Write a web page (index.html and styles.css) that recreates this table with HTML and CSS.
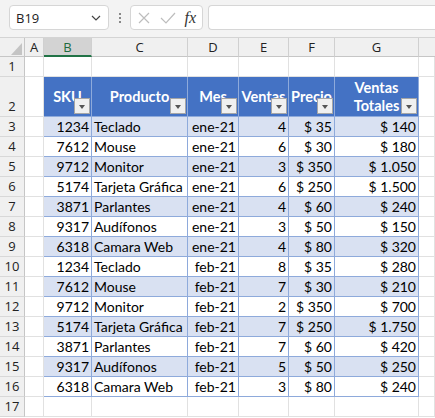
FILE: index.html
```html
<!DOCTYPE html>
<html>
<head>
<meta charset="utf-8">
<link rel="stylesheet" href="styles.css">
</head>
<body>
<div class="toolbar">
  <div class="namebox"><span class="name">B19</span>
    <svg class="chev" width="10" height="6" viewBox="0 0 10 6"><path d="M1 1 L5 5 L9 1" fill="none" stroke="#444" stroke-width="1.2"/></svg>
  </div>
  <div class="dots"><span></span><span></span><span></span></div>
  <div class="fxbox">
    <svg width="14" height="14" viewBox="0 0 14 14"><path d="M2 2 L12 12 M12 2 L2 12" stroke="#bdbdbd" stroke-width="1.2" fill="none"/></svg>
    <svg width="16" height="14" viewBox="0 0 16 14"><path d="M1 7 L6 12 L15 2" stroke="#bdbdbd" stroke-width="1.2" fill="none"/></svg>
    <span class="fx">fx</span>
  </div>
  <div class="formula"></div>
</div>
<div class="sheet">
  <div class="corner"><svg width="25" height="19" viewBox="0 0 25 19"><path d="M11 17 L22 17 L22 5 Z" fill="#c4c4c4"/></svg></div>
  <div class="ch">A</div><div class="ch sel">B</div><div class="ch">C</div><div class="ch">D</div><div class="ch">E</div><div class="ch">F</div><div class="ch">G</div><div class="ch last"></div>

  <div class="rh">1</div><div class="c"></div><div class="c"></div><div class="c"></div><div class="c"></div><div class="c"></div><div class="c"></div><div class="c"></div><div class="c"></div>

  <div class="rh tall">2</div><div class="c"></div>
  <div class="hd">SKU<span class="fb"></span></div>
  <div class="hd">Producto<span class="fb"></span></div>
  <div class="hd">Mes<span class="fb"></span></div>
  <div class="hd">Ventas<span class="fb"></span></div>
  <div class="hd">Precio<span class="fb"></span></div>
  <div class="hd two">Ventas<br>Totales<span class="fb"></span></div>
  <div class="c"></div>

  <div class="rh">3</div><div class="c"></div><div class="t b n">1234</div><div class="t b">Teclado</div><div class="t b n">ene-21</div><div class="t b n">4</div><div class="t b n">$ 35</div><div class="t b n">$ 140</div><div class="c"></div>
  <div class="rh">4</div><div class="c"></div><div class="t n">7612</div><div class="t">Mouse</div><div class="t n">ene-21</div><div class="t n">6</div><div class="t n">$ 30</div><div class="t n">$ 180</div><div class="c"></div>
  <div class="rh">5</div><div class="c"></div><div class="t b n">9712</div><div class="t b">Monitor</div><div class="t b n">ene-21</div><div class="t b n">3</div><div class="t b n">$ 350</div><div class="t b n">$ 1.050</div><div class="c"></div>
  <div class="rh">6</div><div class="c"></div><div class="t n">5174</div><div class="t">Tarjeta Gráfica</div><div class="t n">ene-21</div><div class="t n">6</div><div class="t n">$ 250</div><div class="t n">$ 1.500</div><div class="c"></div>
  <div class="rh">7</div><div class="c"></div><div class="t b n">3871</div><div class="t b">Parlantes</div><div class="t b n">ene-21</div><div class="t b n">4</div><div class="t b n">$ 60</div><div class="t b n">$ 240</div><div class="c"></div>
  <div class="rh">8</div><div class="c"></div><div class="t n">9317</div><div class="t">Audífonos</div><div class="t n">ene-21</div><div class="t n">3</div><div class="t n">$ 50</div><div class="t n">$ 150</div><div class="c"></div>
  <div class="rh">9</div><div class="c"></div><div class="t b n">6318</div><div class="t b">Camara Web</div><div class="t b n">ene-21</div><div class="t b n">4</div><div class="t b n">$ 80</div><div class="t b n">$ 320</div><div class="c"></div>
  <div class="rh">10</div><div class="c"></div><div class="t n">1234</div><div class="t">Teclado</div><div class="t n">feb-21</div><div class="t n">8</div><div class="t n">$ 35</div><div class="t n">$ 280</div><div class="c"></div>
  <div class="rh">11</div><div class="c"></div><div class="t b n">7612</div><div class="t b">Mouse</div><div class="t b n">feb-21</div><div class="t b n">7</div><div class="t b n">$ 30</div><div class="t b n">$ 210</div><div class="c"></div>
  <div class="rh">12</div><div class="c"></div><div class="t n">9712</div><div class="t">Monitor</div><div class="t n">feb-21</div><div class="t n">2</div><div class="t n">$ 350</div><div class="t n">$ 700</div><div class="c"></div>
  <div class="rh">13</div><div class="c"></div><div class="t b n">5174</div><div class="t b">Tarjeta Gráfica</div><div class="t b n">feb-21</div><div class="t b n">7</div><div class="t b n">$ 250</div><div class="t b n">$ 1.750</div><div class="c"></div>
  <div class="rh">14</div><div class="c"></div><div class="t n">3871</div><div class="t">Parlantes</div><div class="t n">feb-21</div><div class="t n">7</div><div class="t n">$ 60</div><div class="t n">$ 420</div><div class="c"></div>
  <div class="rh">15</div><div class="c"></div><div class="t b n">9317</div><div class="t b">Audífonos</div><div class="t b n">feb-21</div><div class="t b n">5</div><div class="t b n">$ 50</div><div class="t b n">$ 250</div><div class="c"></div>
  <div class="rh">16</div><div class="c"></div><div class="t n">6318</div><div class="t">Camara Web</div><div class="t n">feb-21</div><div class="t n">3</div><div class="t n">$ 80</div><div class="t n">$ 240</div><div class="c"></div>

  <div class="rh">17</div><div class="c"></div><div class="c"></div><div class="c"></div><div class="c"></div><div class="c"></div><div class="c"></div><div class="c"></div><div class="c"></div>
</div>
</body>
</html>
```
FILE: styles.css
```css
* { box-sizing: border-box; }
html, body { margin: 0; padding: 0; background: #fff; }
body { width: 435px; height: 418px; overflow: hidden; font-family: Lato, "Liberation Sans", sans-serif; }

.toolbar {
  height: 38px;
  background: #f3f3f3;
  display: flex;
  align-items: flex-start;
  padding: 5px 0 0 9px;
  border-bottom: 1px solid #d4d4d4;
}
.namebox {
  width: 100px; height: 25px;
  background: #fff;
  border: 1px solid #d6d6d6;
  border-radius: 4px;
  display: flex; align-items: center; justify-content: space-between;
  padding: 0 7px 0 6px;
  font-family: "Open Sans", "Liberation Sans", sans-serif;
  font-size: 13px; color: #222;
}
.dots {
  width: 21px; height: 25px;
  display: flex; flex-direction: column; align-items: center; justify-content: center; gap: 2px;
}
.dots span { width: 2px; height: 2px; background: #888; display: block; }
.fxbox {
  width: 73px; height: 25px;
  background: #fff;
  border: 1px solid #d6d6d6;
  border-radius: 4px;
  display: flex; align-items: center; justify-content: space-between;
  padding: 0 6px 0 6px;
}
.fx { font-family: "Liberation Serif", serif; font-style: italic; font-size: 16px; color: #333; }
.formula {
  flex: 1; height: 25px; margin-left: 5px;
  background: #fff;
  border: 1px solid #d6d6d6; border-right: none;
  border-radius: 4px 0 0 4px;
}

.sheet {
  display: grid;
  grid-template-columns: 25px 19px 48px 96px 51px 50px 46px 84px 1fr;
  grid-template-rows: 19px 20px 40px repeat(15, 20px);
  font-size: 14px;
}
.corner { background: #f0f0f0; border-right: 1px solid #c6c6c6; border-bottom: 1px solid #c6c6c6; }
.corner svg { display: block; }
.ch {
  background: #f0f0f0;
  border-right: 1px solid #d0d0d0;
  border-bottom: 1px solid #c6c6c6;
  text-align: center;
  font-family: "Open Sans", "Liberation Sans", sans-serif;
  font-size: 13px; line-height: 18px; color: #222;
}
.ch.sel { background: #d3d3d3; color: #1e6b3f; border-bottom: 2px solid #217346; }
.ch.last { border-right: none; }
.rh {
  background: #f0f0f0;
  border-right: 1px solid #c6c6c6;
  border-bottom: 1px solid #d8d8d8;
  text-align: center;
  font-family: "Open Sans", "Liberation Sans", sans-serif;
  font-size: 13px; line-height: 19px; color: #222;
}
.rh.tall { display: flex; align-items: flex-end; justify-content: center; line-height: 19px; }
.c { border-right: 1px solid #e1e1e1; border-bottom: 1px solid #e1e1e1; }

.hd {
  position: relative;
  background: #4472c4;
  color: #fff;
  font-weight: bold;
  border-right: 1px solid #8eaadb;
  border-bottom: 1px solid #8eaadb;
  display: flex; align-items: center; justify-content: center;
  text-align: center;
  font-size: 14.5px;
  line-height: 18px;
  white-space: nowrap;
  overflow: hidden;
}
.fb {
  position: absolute; right: 1px; bottom: 2px;
  width: 16px; height: 16px;
  background: #f0f0f0;
  border: 1px solid #a6a6a6;
}
.fb::after {
  content: ""; position: absolute; left: 4px; top: 6px;
  border-left: 3.5px solid transparent; border-right: 3.5px solid transparent;
  border-top: 4px solid #555;
}

.t {
  border-right: 1px solid #8eaadb;
  border-bottom: 1px solid #8eaadb;
  line-height: 19px;
  padding: 0 2px;
  color: #000;
  white-space: nowrap;
  overflow: hidden;
}
.t.b { background: #d9e1f2; }
.t.n { text-align: right; }
```
